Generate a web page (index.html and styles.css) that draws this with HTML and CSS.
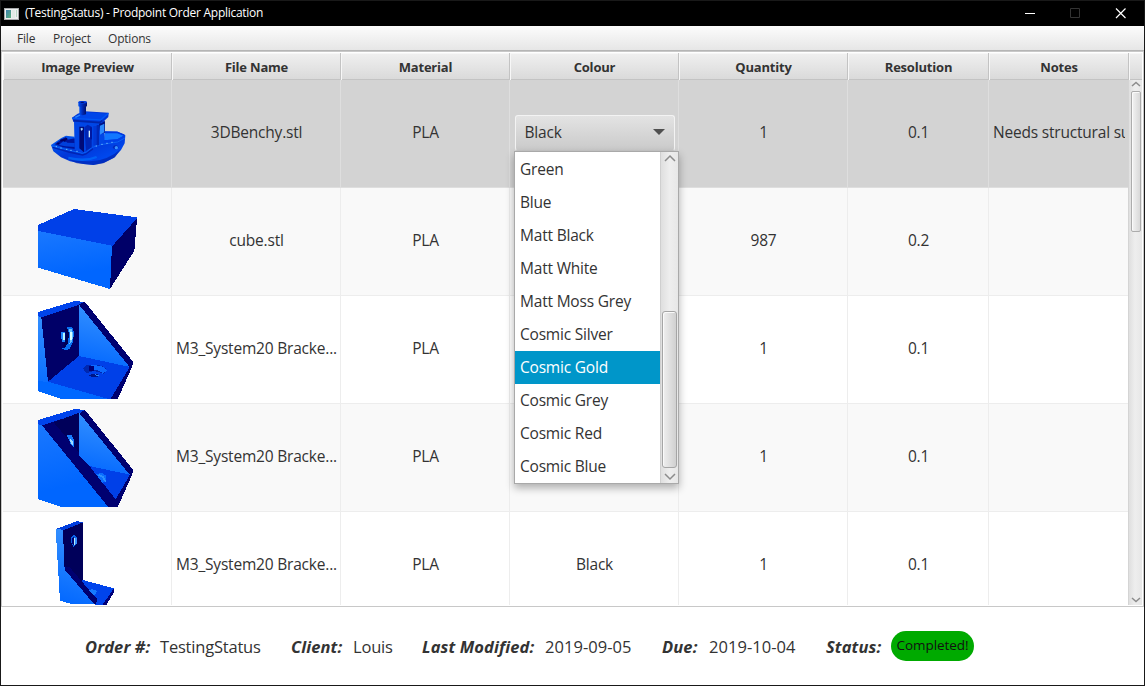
FILE: index.html
```html
<!DOCTYPE html>
<html lang="en">
<head>
<meta charset="utf-8">
<title>(TestingStatus) - Prodpoint Order Application</title>
<link rel="stylesheet" href="styles.css">
</head>
<body>
<div class="window">
  <header class="titlebar">
    <svg class="app-icon" width="15" height="12" viewBox="0 0 15 12" shape-rendering="crispEdges">
      <defs><linearGradient id="ic" x2="1" y2="1"><stop stop-color="#3b7fae"/><stop offset="1" stop-color="#5db37c"/></linearGradient></defs>
      <rect width="15" height="12" fill="#a9abad"/><rect x="1" y="1" width="13" height="10" fill="#eef0f0"/>
      <rect x="2" y="2" width="5" height="8" fill="url(#ic)"/><rect x="8" y="2" width="3" height="8" fill="#e2ebe6"/><rect x="12" y="2" width="1" height="7" fill="#b9d9c6"/>
    </svg>
    <span class="title">(TestingStatus) - Prodpoint Order Application</span>
    <div class="controls">
      <svg width="46" height="25"><path d="M10 12.5h10" stroke="#fff"/></svg>
      <svg width="46" height="25"><path d="M9.500 7.500h9v9h-9z" fill="none" stroke="#333"/></svg>
      <svg width="46" height="25"><path d="M9 7.500l9.500 9.500M18.500 7.500L9 17" stroke="#fff" stroke-width="1.200"/></svg>
    </div>
  </header>
  <nav class="menubar"><span class="m-file">File</span><span class="m-project">Project</span><span>Options</span></nav>
  <main class="table">
    <div class="grid head">
      <div>Image Preview</div><div>File Name</div><div>Material</div><div>Colour</div><div>Quantity</div><div>Resolution</div><div>Notes</div><div class="corner"></div>
    </div>
    <div class="body">
      <div class="rows">
        <div class="grid row selected">
          <div><svg class="preview" viewBox="0 0 168 107"><defs>
            <linearGradient id="hull" x2="1" y2="1"><stop stop-color="#0068ff"/><stop offset=".45" stop-color="#0037d8"/><stop offset=".75" stop-color="#0048ee"/><stop offset="1" stop-color="#0020a0"/></linearGradient>
            <linearGradient id="dark" x2="1"><stop stop-color="#0050f0"/><stop offset=".5" stop-color="#0028b0"/><stop offset="1" stop-color="#00106c"/></linearGradient></defs>
            <g transform="translate(27 10) scale(.33333)">
              <path d="M63 165L94 144 108 137 134 140 134 160 185 170 222 150 225 124 262 125 286 136 284 160 273 180 252 203 222 218 190 225 160 222 120 214 93 202 70 184z" fill="url(#hull)"/>
              <path d="M74 163l22-16 12-6 3 8 24-4v32l-36-5z" fill="#00149a"/><path d="M86 165l18-14 8 7 22 1v12l-28-2z" fill="#0040dc"/><path d="M91 152l21-6M85 158v5M104 147v8" stroke="#000065" stroke-width="6"/>
              <path d="M225 127l36 0 22 9-21 12-40 3z" fill="#1277ff"/><path d="M225 127l36 0 22 9" fill="none" stroke="#0038e0" stroke-width="5"/>
              <path d="M222 151l40-3 23-12-2 10-32 13-66 10z" fill="#0040e8"/>
              <path d="M66 168l33 8 29 7 29 7 12-4 18-14 25-8 51-8 22-12" fill="none" stroke="#0a62f4" stroke-width="3"/>
              <path d="M68 172l48 14 42 9 10-3 21-16" fill="none" stroke="#0024b3" stroke-width="4"/>
              <path d="M90 196q40 19 90 18 55-2 92-37l-17 25-35 18-30 5-50-5z" fill="#0024ae" opacity=".65"/><path d="M115 204q50 12 85-3" fill="none" stroke="#0076ff" stroke-width="7" opacity=".6"/>
              <path d="M132 93l77 5 14-10v70l-40 14-28 14-21-7z" fill="#0046e6"/>
              <path d="M148 110h14v77l-14-12z" fill="#000a77"/><path d="M163 112l10-8 12 6v62l-17 10z" fill="#0025b5"/><path d="M176 122h5v20h-5z" fill="#d8f2ff"/><path d="M180 112h6v36h-6z" fill="#0018a0"/><path d="M151 116l5-3 3 4-4 6z" fill="#a5dcff"/><path d="M190 108h12v58h-12z" fill="#0038d5"/>
              <path d="M207 101l18-8v35l-14 4z" fill="#001384"/><path d="M210 107l13-6v26l-13 7z" fill="#2b8aff"/><path d="M200 105h7v61h-7z" fill="#0028b6"/><path d="M207 137l15-7v24l-15 4z" fill="#0047e7"/>
              <path d="M126 83l17-12 21-7 72 4-1 13-20 19-85-5z" fill="#0036d6"/><path d="M126 84l18-10 20-8 71 5-20 19z" fill="#0046e9"/><path d="M126 85l86 5 23-20" fill="none" stroke="#0058f6" stroke-width="4"/><path d="M130 92l78 6 9-6" fill="none" stroke="#0025aa" stroke-width="5"/><path d="M136 82l14-7" stroke="#2b88ff" stroke-width="4"/>
              <path d="M148 47h20v26l-10 3-10-3z" fill="url(#dark)"/><path d="M145 36q12-6 26 0v13q-13 6-26 0z" fill="url(#dark)"/><ellipse cx="158" cy="37" rx="13" ry="4" fill="#003ce0"/><ellipse cx="157" cy="37" rx="6" ry="2" fill="#001070"/>
              <ellipse cx="257" cy="172" rx="8" ry="6" fill="#0028b9"/><ellipse cx="259" cy="173" rx="5" ry="5" fill="#3892ff"/>
              <path d="M77 170h4M91 174h4M108 178h4M121 181h4M139 184h4M197 168h4M214 163h4M229 160h4M244 157h4" stroke="#70bdff" stroke-width="3"/>
            </g></svg></div>
          <div><span>3DBenchy.stl</span></div><div><span>PLA</span></div><div><button class="combo"><span>Black</span><svg width="12" height="7"><path d="M0 0h12L6 6z" fill="#505050"/></svg></button></div><div><span>1</span></div><div><span>0.1</span></div><div class="notes"><span>Needs structural su</span></div>
        </div>
        <div class="grid row odd">
          <div><svg class="preview" viewBox="0 0 168 107" shape-rendering="crispEdges"><defs><linearGradient id="front" x2=".2" y2="1"><stop stop-color="#1a78ff"/><stop offset=".8" stop-color="#0066ff"/></linearGradient><linearGradient id="side" x1=".2" x2="0" y2="1"><stop stop-color="#3490ff"/><stop offset="1" stop-color="#0066ff"/></linearGradient></defs><g transform="translate(27 12) scale(.33333)">
            <path d="M236 130L321 52 319 84 313 152 240 267z" fill="#000068"/><path d="M24 75L132 27 321 52 321 55 246 139 24 96z" fill="#0040e8"/><path d="M24 93L246 137 240 267 24 203z" fill="url(#front)"/></g></svg></div>
          <div><span>cube.stl</span></div><div><span>PLA</span></div><div></div><div><span>987</span></div><div><span>0.2</span></div><div></div>
        </div>
        <div class="grid row">
          <div><svg class="preview" viewBox="0 0 168 107" shape-rendering="crispEdges"><g transform="translate(27 0) scale(.33333)">
            <path d="M24 48L134 15 164 18 148 28 34 65 24 62z" fill="#0044ec"/><path d="M24 61L34 64 54 257 242 308H93L24 286z" fill="url(#side)"/><path d="M34 64L147 27V181L54 257z" fill="#000068"/><path d="M147 26L300 213 147 181z" fill="url(#side)"/><path d="M54 257L147 180 300 213 242 308H232z" fill="#0040e8"/><path d="M147 26L164 17 309 197 307 211 264 308H242L299 213z" fill="#000070"/><path d="M54 257l178 51H93L24 286V256z" fill="#0068ff"/>
            <path d="M112 94l14-1 6 16-3 30-10 19-12 5-13-5 12-4 7-15 2-20z" fill="#0870f4"/><path d="M116 98l9 0 5 20-4 20-8 8 3-27z" fill="#6bc3ff"/><path d="M121 108h5v24h-5z" fill="#d9ffff"/><path d="M94 108h10v30h-6l-4-12z" fill="#1b86ff"/><path d="M100 112h4v20h-4z" fill="#b8f4ff"/><path d="M105 96l8 3 4 16-4 27-9 12-5-4 7-14 2-25z" fill="#000052"/>
            <path d="M159 218q4-13 31-12 38 1 40 19l-10 10q-10-9-32-9l-19 6z" fill="#0028b0"/><path d="M178 209q44-5 52 15l-12 10q-6-13-28-12z" fill="#0b69ff"/><path d="M177 211h14v13h-14z" fill="#000078"/><path d="M175 238l17-5 18 4-6 6-17 1z" fill="#001586"/><path d="M193 235l17 2-9 5z" fill="#258bff"/></g></svg></div>
          <div><span>M3_System20 Bracke...</span></div><div><span>PLA</span></div><div></div><div><span>1</span></div><div><span>0.1</span></div><div></div>
        </div>
        <div class="grid row odd">
          <div><svg class="preview" viewBox="0 0 168 107" shape-rendering="crispEdges"><g transform="translate(27 0) scale(.33333)">
            <path d="M36 64L164 17 309 197 307 211 264 308H233z" fill="#000070"/><path d="M24 48L134 15 164 18 148 28 35 65 24 62z" fill="#0044ec"/><path d="M71 55L147 26V153L182 187z" fill="#00005a"/><path d="M147 26L300 213 178 187 147 153z" fill="url(#side)"/><path d="M178 186L300 212 257 286z" fill="#0040e8"/><path d="M24 61L36 64 234 308H93L24 286z" fill="url(#front)"/><path d="M111 94l14-1 7 17-1 19-9-9z" fill="#167dff"/><path d="M119 104l9 7 2 15-7-6z" fill="#9fdcff"/><path d="M199 211l15-5 15 9-1 18-12 3z" fill="#0a6fff"/><path d="M206 212l13 7 8 14" stroke="#2b91ff" stroke-width="5" fill="none"/></g></svg></div>
          <div><span>M3_System20 Bracke...</span></div><div><span>PLA</span></div><div></div><div><span>1</span></div><div><span>0.1</span></div><div></div>
        </div>
        <div class="grid row">
          <div><svg class="preview" viewBox="0 0 168 107" shape-rendering="crispEdges"><g transform="translate(27 0) scale(.33333)">
            <path d="M99 53L159 30 160 206 206 262 196 276 103 166z" fill="#00005a"/><path d="M76 52L142 27 159 31 99 55z" fill="#003ddd"/><path d="M77 51L99 53 103 162 196 277H128L90 266z" fill="url(#side)"/><path d="M158 204L252 229 250 242 229 279H196L202 262 156 210z" fill="#0044ec"/><path d="M252 229v12l-23 38h-12z" fill="#000078"/><path d="M103 162L119 166 203 264 193 277 105 174z" fill="#000070"/><path d="M123 78l10-11 8 10v18l-10 10-6-9z" fill="#0a61e5"/><path d="M125 79l6-5v24l-6-5z" fill="#000074"/><path d="M131 77h5v22h-5z" fill="#b0f0ff"/><path d="M136 78h4v18h-4z" fill="#398fff"/><path d="M177 236l9-5 14 5-1 11-10 2z" fill="#167aff"/></g></svg></div>
          <div><span>M3_System20 Bracke...</span></div><div><span>PLA</span></div><div><span>Black</span></div><div><span>1</span></div><div><span>0.1</span></div><div></div>
        </div>
      </div>
      <div class="scroll">
        <svg width="10" height="6"><path d="M1 5l4-3.500L9 5" class="chev"/></svg>
        <div class="thumb"></div>
        <svg class="down" width="10" height="6"><path d="M1 1l4 3.500L9 1" class="chev"/></svg>
      </div>
    </div>
  </main>
  <footer class="status">
    <b>Order #:</b><span>TestingStatus</span><b>Client:</b><span>Louis</span><b>Last Modified:</b><span class="date">2019-09-05</span><b>Due:</b><span class="date">2019-10-04</span><b>Status:</b><span class="pill">Completed!</span>
  </footer>
  <div class="popup">
    <ul>
      <li>Green</li><li>Blue</li><li>Matt Black</li><li>Matt White</li><li>Matt Moss Grey</li><li>Cosmic Silver</li><li class="active">Cosmic Gold</li><li>Cosmic Grey</li><li>Cosmic Red</li><li>Cosmic Blue</li>
    </ul>
    <div class="popup-scroll">
      <svg width="12" height="8"><path d="M1 7l5-5 5 5" class="chev"/></svg>
      <div class="popup-thumb"></div>
      <svg width="12" height="8"><path d="M1 1l5 5 5-5" class="chev"/></svg>
    </div>
  </div>
</div>
</body>
</html>
```
FILE: styles.css
```css
* { box-sizing: border-box; }
body { margin: 0; font-family: "Open Sans", "Noto Sans", sans-serif; color: #333; }
.window { position: relative; width: 1145px; height: 686px; border: 1px solid #191919; background: #fff; display: flex; flex-direction: column; overflow: hidden; }
.titlebar { height: 25px; flex: none; background: #000; color: #fff; display: flex; align-items: center; padding-left: 3px; }
.app-icon { flex: none; }
.title { margin-left: 6px; font-size: 12px; letter-spacing: -.27px; line-height: 24px; padding-bottom: 1px; }
.controls { margin-left: auto; display: flex; margin-right: -9px; }
.menubar { height: 25px; flex: none; display: flex; background: linear-gradient(#fcfcfc, #e6e6e6); border-bottom: 1px solid #b5b5b5; padding-left: 16px; font-size: 12px; line-height: 25px; letter-spacing: -.2px; }
.m-file { width: 36px; }
.m-project { width: 55px; }
.table { height: 556px; flex: none; border: 1px solid #c8c8c8; display: flex; flex-direction: column; padding: 1px; }
.grid { display: grid; grid-template-columns: 169px 169px 169px 169px 169px 141px 140px 12px; }
.head { height: 27px; flex: none; background: linear-gradient(#f0f0f0, #dadada); border-bottom: 1px solid #c3c3c3; font-size: 13px; font-weight: 700; letter-spacing: -.2px; line-height: 28px; text-align: center; }
.head > div { border-right: 1px solid #c3c3c3; box-shadow: inset 1px 1px #f7f7f7; padding-left: 1px; }
.head .corner { border-right: 0; }
.body { flex: 1; min-height: 0; display: flex; }
.rows { width: 1126px; overflow: hidden; }
.row { grid-template-columns: 169px 169px 169px 169px 169px 141px 140px; height: 108px; border-bottom: 1px solid #ededed; background: #fff; font-size: 15.5px; letter-spacing: -.2px; }
.row > div { border-right: 1px solid #ededed; display: flex; align-items: center; justify-content: center; overflow: hidden; white-space: nowrap; padding: 0 0 4px 1px; }
.row > div:first-child { padding: 0; }
.row > div:last-child { border-right: 0; }
.odd { background: #f9f9f9; }
.selected { background: #d3d3d3; border-color: #dedede; }
.selected > div { border-color: #dedede; }
.preview { width: 168px; height: 107px; flex: none; }
.row > .notes { justify-content: flex-start; margin: 0 4px; padding-left: 0; }
.combo { width: 160px; height: 36px; flex: none; margin-top: 2px; padding: 0 9px 2px; display: flex; align-items: center; justify-content: space-between; border: 1px solid #f3f3f3; border-bottom-color: #c8c8c8; border-radius: 3px; background: linear-gradient(#e3e3e3, #cacaca); font: inherit; letter-spacing: inherit; color: #333; }
.combo svg { margin-top: 2px; }
.scroll { width: 14px; background: linear-gradient(90deg, #d4d4d4 1px, #dfdfdf 1px, #eee 50%, #e7e7e7); display: flex; flex-direction: column; align-items: center; padding: 1px 0 2px 1px; }
.chev { fill: none; stroke: #8c8c8c; stroke-width: 1.500; }
.thumb { width: 10px; height: 141px; margin-top: 4px; border: 1px solid #acacac; border-radius: 2px; background: linear-gradient(90deg, #f3f3f3, #d8d8d8); box-shadow: inset 1px 1px #fafafa; }
.down { margin-top: auto; }
.status { flex: 1; display: grid; grid-template-columns: 75px 131px 62px 69px 123px 117px 47px 117px 65px 83px; align-items: center; padding-left: 84px; font-size: 16.5px; white-space: nowrap; letter-spacing: -.2px; }
.status b { font-style: italic; letter-spacing: .1px; }
.status .date { letter-spacing: .05px; }
.status .pill { height: 30px; border-radius: 15px; background: #00aa00; color: #111; font-size: 13.5px; text-align: center; line-height: 29px; letter-spacing: -.05px; }
.popup { position: absolute; left: 513px; top: 150px; width: 165px; height: 333px; display: flex; background: #fff; border: 1px solid #a9a9a9; box-shadow: 0 4px 8px rgba(0,0,0,.3); }
.popup ul { width: 145px; margin: 0; padding: 1px 0 0; list-style: none; font-size: 15.5px; letter-spacing: -.2px; line-height: 33px; }
.popup li { height: 33px; padding-left: 5px; }
.popup .active { background: #0096c9; color: #fff; }
.popup-scroll { flex: 1; border-left: 1px solid #cfcfcf; background: linear-gradient(90deg, #dfdfdf, #eee 50%, #e7e7e7); display: flex; flex-direction: column; align-items: center; padding: 2px 0; }
.popup-thumb { width: 15px; height: 157px; margin: auto 0 5px; border: 1px solid #a5a5a5; border-radius: 3px; background: linear-gradient(90deg, #efefef, #d0d0d0); box-shadow: inset 1px 1px #fafafa; }
```
